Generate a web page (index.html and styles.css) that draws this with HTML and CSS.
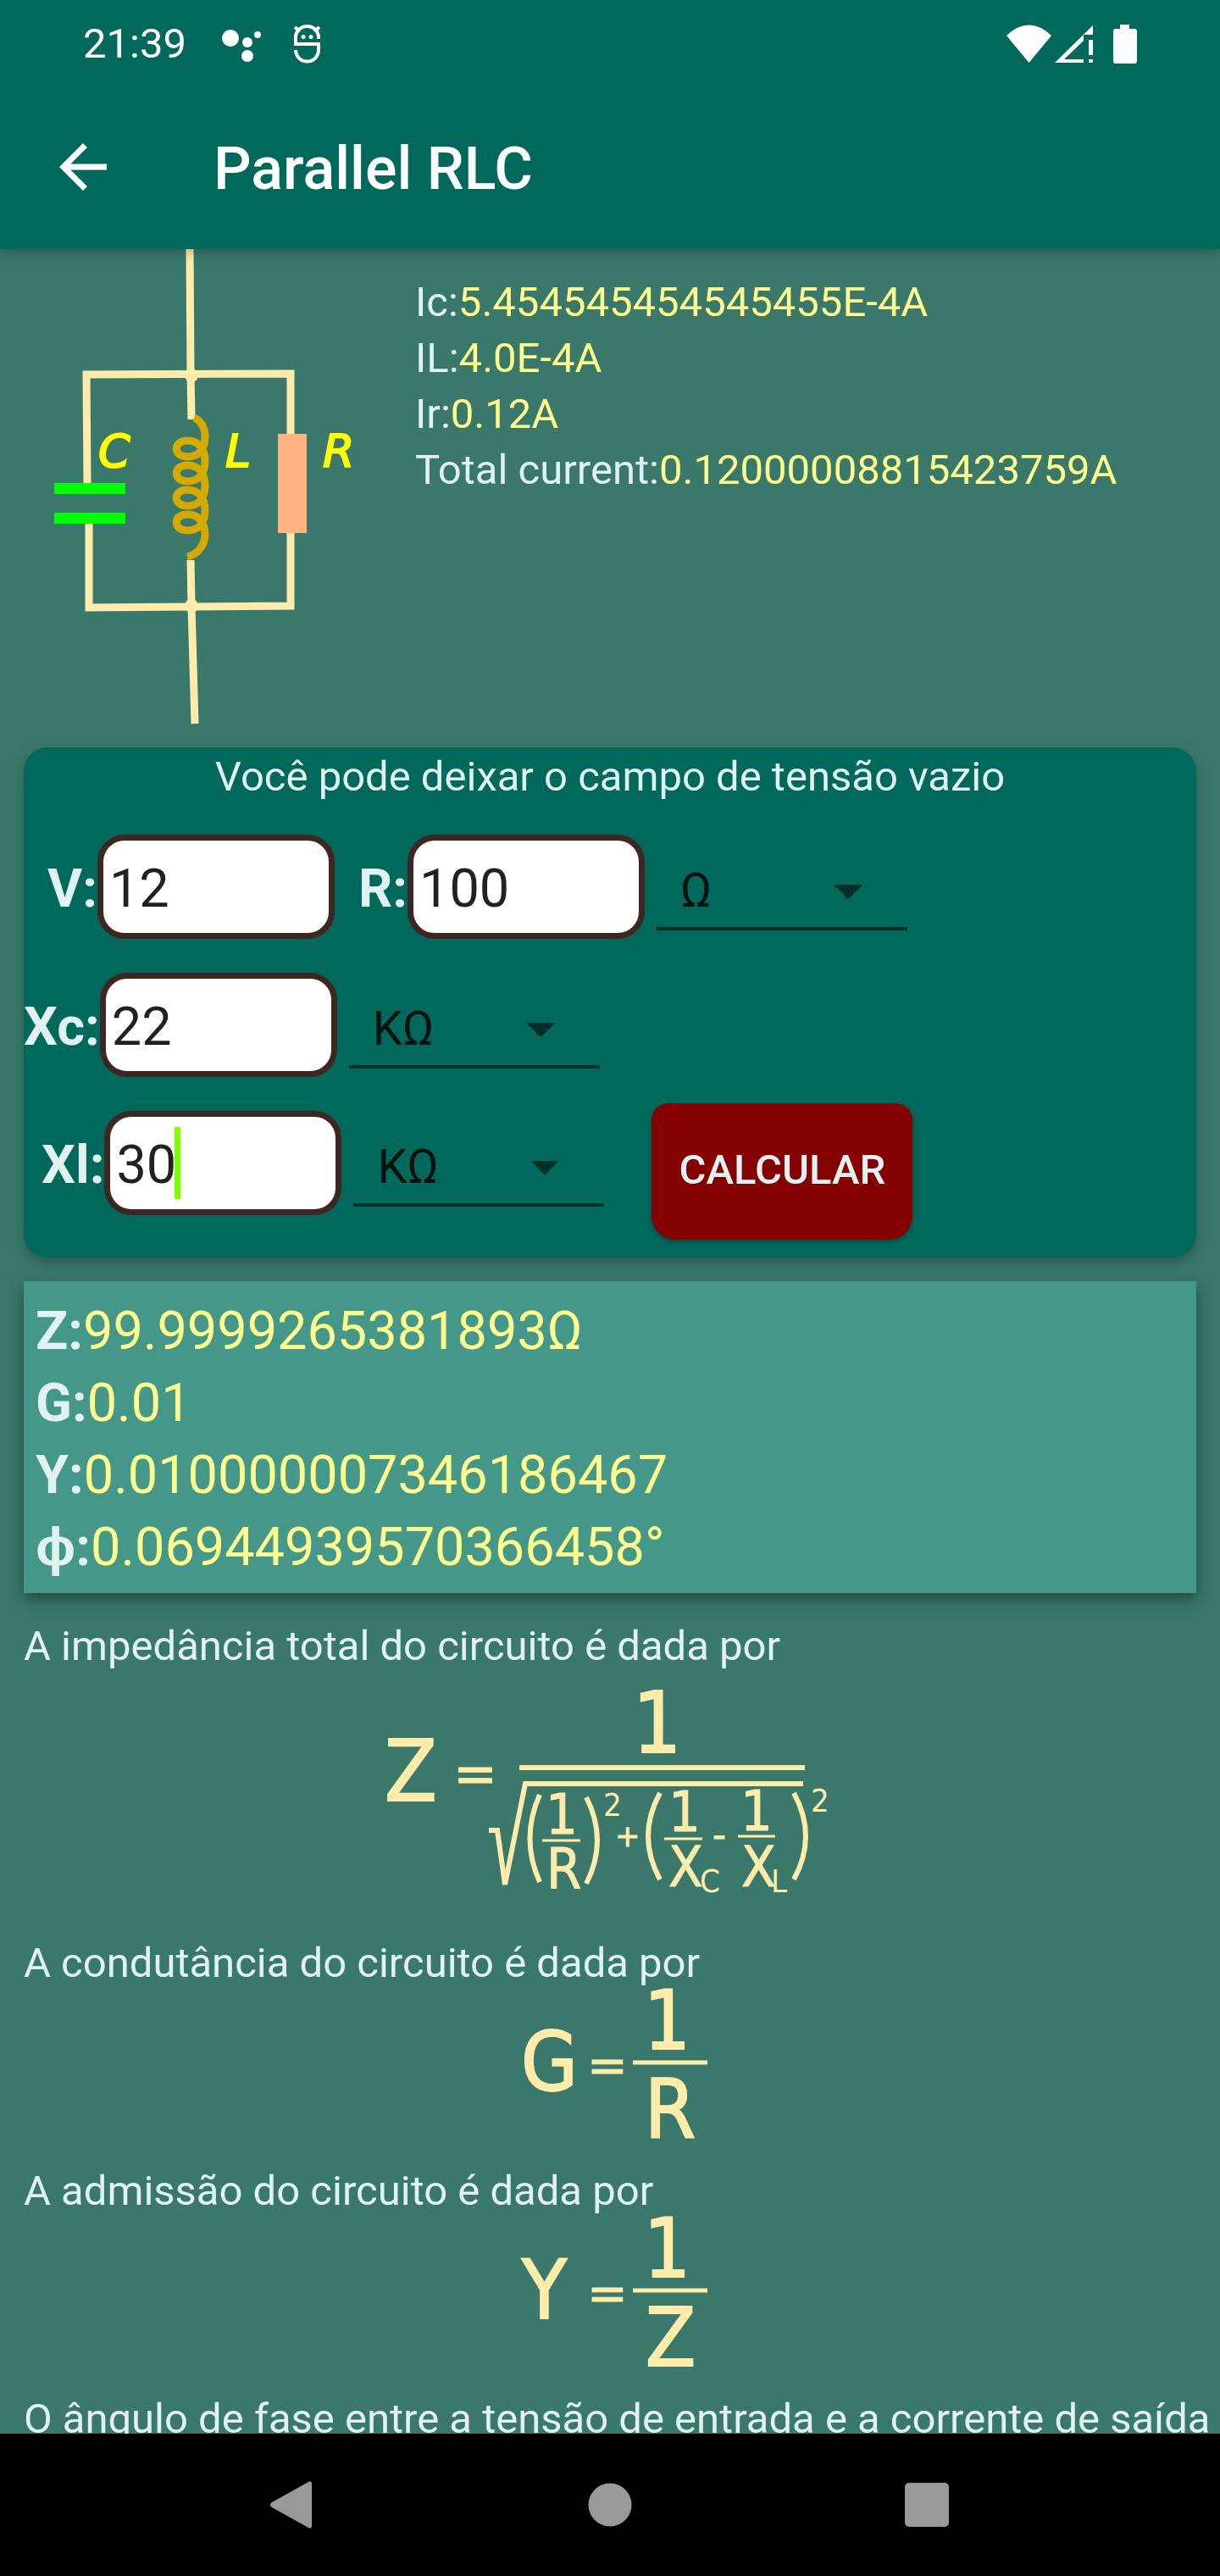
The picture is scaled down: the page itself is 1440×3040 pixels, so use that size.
FILE: index.html
```html
<!DOCTYPE html>
<html lang="pt-BR">
<head>
    <meta charset="UTF-8">
    <meta name="viewport" content="width=device-width, initial-scale=1.0">
    <title>Parallel RLC</title>
    <link rel="stylesheet" href="styles.css">
</head>
<body>
    <header class="header">
        <div class="status-bar">
            <span class="time">21:39</span>
            <svg class="icon-dots" width="46" height="44" viewBox="0 0 46 44">
                <circle cx="10" cy="15" r="10"/>
                <circle cx="30" cy="20" r="6"/>
                <circle cx="42" cy="11" r="4"/>
                <circle cx="30" cy="36" r="7"/>
            </svg>
            <svg class="icon-debug" width="34" height="46" viewBox="0 0 34 46">
                <path d="M30 17V15A13.5 13 0 0 0 3 15V23H30V30A13.5 13.5 0 0 1 3 30" fill="none" stroke="#fff" stroke-width="4"/>
                <path d="M2 3l6 5M31 3l-6 5" stroke="#fff" stroke-width="4"/>
                <circle cx="12" cy="14.500" r="2.500"/>
                <circle cx="21" cy="14.500" r="2.500"/>
            </svg>
            <div class="status-right">
                <svg width="53" height="46" viewBox="0 0 53 46"><path d="M0 13Q26.500-12 53 13L26.500 45Z"/></svg>
                <svg width="45" height="46" viewBox="0 0 45 46"><path d="M0 45L45 1V12H34V19L11 41H34V45ZM40 18h5v18h-5ZM40 41h5v4h-5Z"/></svg>
                <svg class="icon-battery" width="28" height="46" viewBox="0 0 28 46"><path d="M8 0h11v5h6q3 0 3 3v35q0 3-3 3H3q-3 0-3-3V8q0-3 3-3h5Z"/></svg>
            </div>
        </div>
        <div class="toolbar">
            <button class="back" type="button" aria-label="Voltar">
                <svg width="84" height="84" viewBox="0 0 24 24"><path d="M20 11H7.830l5.590-5.590L12 4l-8 8 8 8 1.410-1.410L7.830 13H20z"/></svg>
            </button>
            <h1>Parallel RLC</h1>
        </div>
    </header>

    <main class="content">
        <section class="top">
            <svg class="circuit" width="490" height="560" viewBox="0 0 490 560">
                <g fill="none" stroke="#ffebaa" stroke-width="9">
                    <path d="M224 0L225 148L226 201"/>
                    <path d="M103 276L102 148L343 147V218"/>
                    <path d="M343 334V421L105 423V324"/>
                    <path d="M225 367L226 421L230 560"/>
                </g>
                <circle cx="226" cy="149" r="8" fill="#ffebaa"/>
                <circle cx="226" cy="421" r="8" fill="#ffebaa"/>
                <path d="M64 276h84v13H64ZM64 311h84v13H64Z" fill="#00ff00"/>
                <path d="M328 218h34v117h-34Z" fill="#ffb380"/>
                <path d="M229 199C237 202 242 211 242 221C242 238 233 245 221 245C204 245 204 226 221 226
                    C234 226 242 235 242 250C242 267 233 274 221 274C204 274 204 255 221 255
                    C234 255 242 264 242 279C242 296 233 303 221 303C204 303 204 284 221 284
                    C234 284 242 293 242 308C242 325 233 332 221 332C204 332 204 313 221 313
                    C234 313 242 322 242 337C242 350 232 361 221 363" fill="none" stroke="#d4aa00" stroke-width="9"/>
                <g class="circuit-label">
                    <text x="116" y="257">C</text>
                    <text x="266" y="257">L</text>
                    <text x="381" y="257">R</text>
                </g>
            </svg>
            <div class="currents">
                <p>Ic:<span class="value">5.454545454545455E-4A</span></p>
                <p>IL:<span class="value">4.0E-4A</span></p>
                <p>Ir:<span class="value">0.12A</span></p>
                <p>Total current:<span class="value">0.12000008815423759A</span></p>
            </div>
        </section>

        <form class="card">
            <p class="hint">Você pode deixar o campo de tensão vazio</p>
            <div class="row row-v">
                <label for="v">V:</label>
                <input type="text" id="v" value="12">
                <label class="label-r" for="r">R:</label>
                <input type="text" id="r" value="100">
                <select aria-label="Unidade de R">
                    <option>Ω</option>
                    <option>KΩ</option>
                </select>
            </div>
            <div class="row">
                <label for="xc">Xc:</label>
                <input type="text" id="xc" value="22">
                <select aria-label="Unidade de Xc">
                    <option>KΩ</option>
                    <option>Ω</option>
                </select>
            </div>
            <div class="row row-xl">
                <label for="xl">Xl:</label>
                <div class="active-field">
                    <input type="text" id="xl" value="30">
                    <span class="caret"></span>
                </div>
                <select aria-label="Unidade de Xl">
                    <option>KΩ</option>
                    <option>Ω</option>
                </select>
                <button class="calc" type="button">CALCULAR</button>
            </div>
        </form>

        <section class="results">
            <p><b>Z:</b><span class="value">99.9999265381893Ω</span></p>
            <p><b>G:</b><span class="value">0.01</span></p>
            <p><b>Y:</b><span class="value">0.010000007346186467</span></p>
            <p><b>ϕ:</b><span class="value">0.06944939570366458°</span></p>
        </section>

        <section class="formulas">
            <p>A impedância total do circuito é dada por</p>
            <svg class="formula formula-z" width="560" height="270" viewBox="0 0 560 270">
                <g class="big">
                    <text x="14" y="135">Z</text>
                    <text x="307" y="78">1</text>
                </g>
                <text class="sign" x="95" y="125" font-size="62">=</text>
                <g class="mid">
                    <text x="204" y="174">1</text>
                    <text x="205" y="238">R</text>
                    <text x="349" y="171">1</text>
                    <text x="349" y="236">X</text>
                    <text x="434" y="170">1</text>
                    <text x="435" y="236">X</text>
                </g>
                <g class="small">
                    <text x="272" y="153">2</text>
                    <text x="517" y="148">2</text>
                    <text x="386" y="243">C</text>
                    <text x="470" y="243">L</text>
                </g>
                <text class="sign" x="286" y="189" font-size="35">+</text>
                <text class="sign" x="401" y="190" font-size="44">-</text>
                <g fill="none" stroke="#ffebaa">
                    <path d="M173 96H510" stroke-width="6"/>
                    <path d="M137 170H147L156 234L180 115H508" stroke-width="6"/>
                    <path d="M197 128Q174 180 197 231M252 131Q278 182 252 233M339 126Q311 177 339 228M497 126Q525 177 497 228" stroke-width="6"/>
                    <path d="M200 182H245M344 180H389M431 177H475" stroke-width="3"/>
                </g>
            </svg>

            <p>A condutância do circuito é dada por</p>
            <svg class="formula" width="220" height="183" viewBox="0 0 220 183">
                <g class="big">
                    <text x="5" y="121">G</text>
                    <text x="150" y="72">1</text>
                    <text x="151" y="177">R</text>
                </g>
                <text class="sign" x="83" y="111" font-size="57">=</text>
                <path d="M137 88H225" stroke="#ffebaa" stroke-width="5"/>
            </svg>

            <p>A admissão do circuito é dada por</p>
            <svg class="formula" width="220" height="183" viewBox="0 0 220 183">
                <g class="big">
                    <text x="6" y="121">Y</text>
                    <text x="150" y="72">1</text>
                    <text x="152" y="177">Z</text>
                </g>
                <text class="sign" x="83" y="111" font-size="57">=</text>
                <path d="M137 88H225" stroke="#ffebaa" stroke-width="5"/>
            </svg>

            <p>O ângulo de fase entre a tensão de entrada e a corrente de saída</p>
        </section>
    </main>

    <nav class="nav">
        <button type="button" aria-label="Voltar"><svg width="56" height="58" viewBox="0 0 56 58"><path d="M3 26L46 2q4-2 4 2v50q0 4-4 2L3 32q-4-3 0-6Z"/></svg></button>
        <button type="button" aria-label="Início"><svg width="52" height="52" viewBox="0 0 52 52"><circle cx="26" cy="26" r="25.500"/></svg></button>
        <button type="button" aria-label="Recentes"><svg width="52" height="52" viewBox="0 0 52 52"><rect width="52" height="52" rx="5"/></svg></button>
    </nav>
</body>
</html>
```
FILE: styles.css
```css
* {
    box-sizing: border-box;
}
body {
    margin: 0;
    height: 100vh;
    display: flex;
    flex-direction: column;
    font-family: Roboto, sans-serif;
    font-size: 49px;
    line-height: 58px;
    background-color: #39786b;
    color: #e0f2f1;
}
p, h1 {
    margin: 0;
}
button {
    border: none;
    padding: 0;
    background: none;
    font-family: inherit;
}
svg {
    display: block;
    flex-shrink: 0;
    overflow: visible;
}
.value {
    color: #ffff8d;
}

/* header */
.header {
    position: relative;
    background-color: #00695c;
    color: white;
    fill: white;
    box-shadow: 0 4px 14px rgba(0, 0, 0, 0.25);
}
.status-bar {
    display: flex;
    align-items: center;
    height: 84px;
    padding: 20px 98px 0;
}
.icon-dots {
    margin-left: 42px;
}
.icon-debug {
    margin-left: 38px;
}
.status-right {
    display: flex;
    gap: 4px;
    margin-left: auto;
}
.icon-battery {
    margin-left: 20px;
}
.toolbar {
    display: flex;
    align-items: center;
    height: 210px;
    padding: 16px 56px 0;
}
.back {
    fill: inherit;
}
.toolbar h1 {
    margin-left: 112px;
    padding-top: 4px;
    font-size: 70px;
    line-height: 82px;
    font-weight: 500;
}

/* content */
.content {
    flex: 1;
    min-height: 0;
    overflow: hidden;
}
.top {
    display: flex;
    margin-bottom: 28px;
}
.currents {
    padding-top: 30px;
    line-height: 66px;
}
.circuit-label {
    font-family: "DejaVu Sans", sans-serif;
    font-size: 54px;
    font-style: italic;
    fill: #ffff00;
    stroke: #ffff00;
    stroke-width: 2;
}

.card {
    margin: 0 28px;
    padding-bottom: 50px;
    border-radius: 28px;
    background-color: #00695c;
    box-shadow: 0 6px 14px rgba(0, 0, 0, 0.25);
}
.hint {
    padding: 6px 0 39px;
    text-align: center;
}
.row {
    display: flex;
    align-items: center;
    height: 123px;
    margin-bottom: 40px;
}
.row-v {
    padding-left: 28px;
}
.row-xl {
    padding-left: 21px;
    margin-bottom: 0;
}
.row label {
    padding-top: 4px;
    font-size: 63px;
    line-height: 74px;
    font-weight: bold;
}
.row .label-r {
    margin-left: 28px;
}
.row input {
    display: block;
    width: 280px;
    height: 123px;
    padding: 4px 7px 0;
    border: 7px solid #3e2723;
    border-radius: 32px;
    background-color: white;
    color: #212121;
    font-family: inherit;
    font-size: 63px;
}
.row select {
    appearance: none;
    width: 296px;
    height: 102px;
    margin-left: 14px;
    padding: 12px 28px 0;
    border: none;
    border-bottom: 4px solid #00302a;
    border-radius: 0;
    background: conic-gradient(from -45deg at 50% 100%, #00302a 90deg, transparent 0) no-repeat 209px 48px / 34px 17px;
    color: #00120f;
    font-family: inherit;
    font-size: 56px;
}
.active-field {
    position: relative;
}
.caret {
    position: absolute;
    top: 19px;
    left: 83px;
    width: 7px;
    height: 85px;
    background-color: #80ff00;
}
.calc {
    width: 308px;
    height: 161px;
    margin: 20px 0 0 56px;
    padding-bottom: 4px;
    border-radius: 20px 20px 28px 28px;
    background-color: #850000;
    box-shadow: 0 3px 6px rgba(0, 0, 0, 0.3);
    color: #e0f2f1;
    font-size: 49px;
    font-weight: 500;
}

.results {
    margin: 28px 28px 34px;
    padding: 16px 14px 12px;
    background-color: #459889;
    box-shadow: 0 7px 16px rgba(0, 0, 0, 0.4);
    font-size: 63px;
    line-height: 85px;
}

/* formulas */
.formulas {
    white-space: nowrap;
}
.formulas p {
    padding-left: 28px;
}
.formula {
    margin: 0 auto 28px;
    fill: #ffebaa;
    font-family: "DejaVu Sans Condensed", "DejaVu Sans", sans-serif;
}
.formula-z {
    margin-top: 18px;
}
.big {
    font-size: 96px;
    stroke: #ffebaa;
    stroke-width: 2;
}
.formula-z .big {
    font-size: 100px;
}
.mid {
    font-size: 66px;
    stroke: #ffebaa;
}
.small {
    font-size: 38px;
}
.sign {
    font-family: "DejaVu Sans", sans-serif;
    stroke: #ffebaa;
}

/* system navigation */
.nav {
    display: flex;
    justify-content: center;
    height: 168px;
    background-color: black;
}
.nav button {
    display: flex;
    align-items: center;
    justify-content: center;
    width: 26%;
    fill: #999;
}
```
